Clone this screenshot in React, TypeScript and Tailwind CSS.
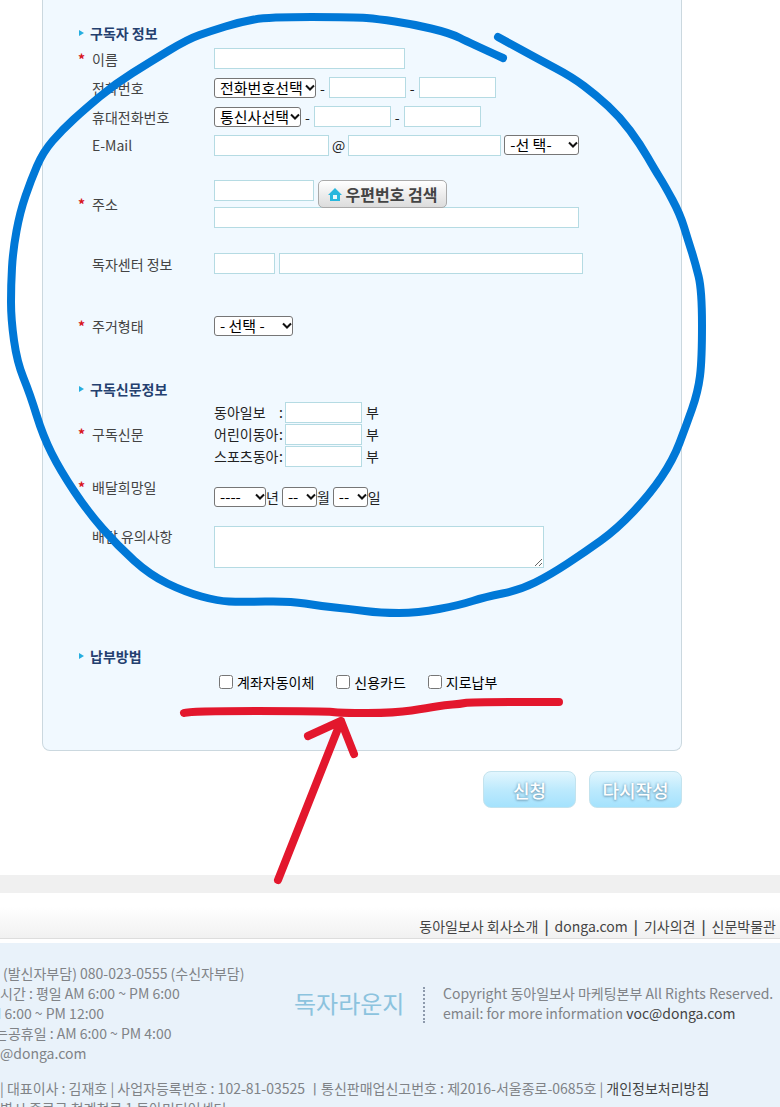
import type { ReactNode } from "react";

type Point = [number, number];

const circlePoints: Point[] = [
  [503, 58], [470, 43], [450, 33], [412, 24], [378, 19], [355, 17], [268, 17], [240, 22], [211, 31],
  [188, 39], [150, 62], [115, 84], [85, 109], [62, 130], [43, 152], [31, 180], [20, 212], [13, 250],
  [11, 285], [11, 319], [17, 362], [30, 394], [43, 436], [60, 470], [88, 512], [118, 546], [150, 575],
  [185, 592], [218, 601], [240, 602], [290, 601], [320, 606], [350, 609], [380, 613], [418, 613],
  [460, 605], [485, 597], [520, 590], [550, 575], [585, 552], [617, 529], [650, 494], [673, 460],
  [686, 426], [698, 392], [702, 360], [702, 290], [695, 262], [688, 240], [680, 214], [665, 186],
  [655, 170], [640, 144], [620, 117], [596, 95], [572, 77], [540, 60], [498, 37],
];

const underlinePoints: Point[] = [
  [184, 713], [190, 711], [325, 711], [340, 713], [395, 713], [428, 708], [445, 705], [460, 704],
  [470, 702], [559, 702],
];

// smooth line through the midpoints of the segments
function toPath(points: Point[]) {
  const last = points[points.length - 1];
  let d = `M${points[0][0]} ${points[0][1]}`;
  for (let i = 1; i < points.length - 1; i++) {
    const [x, y] = points[i];
    const [nx, ny] = points[i + 1];
    d += `Q${x} ${y} ${(x + nx) / 2} ${(y + ny) / 2}`;
  }
  return `${d}L${last[0]} ${last[1]}`;
}

function Marks() {
  return (
    <svg
      className="pointer-events-none absolute left-0 top-0"
      width="780"
      height="900"
      fill="none"
      strokeWidth="8"
      strokeLinecap="round"
      strokeLinejoin="round"
      aria-hidden="true"
    >
      <path stroke="#0078d7" d={toPath(circlePoints)} />
      <g stroke="#e3172d">
        <path d={toPath(underlinePoints)} />
        <path d="M278 880L341 721M308 736L341 721L354 754" />
      </g>
    </svg>
  );
}

const field = "h-[21px] border border-[#b5dbe3] bg-white px-1 text-sm outline-none";

type SelectProps = { id?: string; label?: string; text: string; className: string };

function Select({ id, label, text, className }: SelectProps) {
  return (
    <div className={`relative ${className}`}>
      <select
        id={id}
        aria-label={label}
        className="block h-5 w-full appearance-none rounded-[3px] border border-[#767676] bg-white pl-[5px] text-[15px] leading-[18px] text-black"
      >
        <option>{text}</option>
      </select>
      <svg
        className="pointer-events-none absolute right-px top-[6px]"
        width="10"
        height="8"
        viewBox="0 0 10 8"
        fill="none"
        stroke="#111"
        strokeWidth="2"
        aria-hidden="true"
      >
        <path d="M1 1.5L5 5.5L9 1.5" />
      </svg>
    </div>
  );
}

function Heading({ children, className = "" }: { children: ReactNode; className?: string }) {
  return (
    <h2 className={`flex h-[22px] items-center gap-[5px] text-sm font-bold text-[#24406f] ${className}`}>
      <svg width="7" height="8" viewBox="0 0 7 8" aria-hidden="true">
        <path d="M1 1L6 4L1 7Z" fill="#25aee0" />
      </svg>
      {children}
    </h2>
  );
}

type RowProps = {
  label: string;
  htmlFor?: string;
  required?: boolean;
  className?: string;
  children: ReactNode;
};

function Row({ label, htmlFor, required, className = "h-[29px] items-center", children }: RowProps) {
  return (
    <div className={`flex ${className}`}>
      <span className="w-[14px] shrink-0 text-sm font-bold leading-5 text-[#d8141c]">
        {required && "*"}
      </span>
      <label htmlFor={htmlFor} className="w-[122px] shrink-0 leading-5 text-[#444]">
        {label}
      </label>
      {children}
    </div>
  );
}

const papers = [
  { id: "donga", name: "동아일보" },
  { id: "kids", name: "어린이동아" },
  { id: "sports", name: "스포츠동아" },
];

const payments = [
  { id: "account", name: "계좌자동이체" },
  { id: "card", name: "신용카드" },
  { id: "giro", name: "지로납부" },
];

const submitButton =
  "h-[37px] w-[93px] rounded-[8px] border border-[#c3e3ee] bg-linear-to-b from-[#e2f6fe] via-[#bdeafd] to-[#a4e2fd] text-lg leading-5 font-medium text-white [text-shadow:0_0_3px_#6f9db8,0_1px_2px_#7fa9c0]";

export default function App() {
  return (
    <div className="relative overflow-x-clip bg-white font-['Noto_Sans_CJK_KR',sans-serif] text-sm text-[#222]">
      <form onSubmit={(e) => e.preventDefault()} className="ml-[42px] max-w-[640px]">
        <div className="rounded-b-[8px] border border-t-0 border-[#cbd8df] bg-[#f1f9ff] pb-[54px] pl-[35px] pt-[22px]">
          <Heading>구독자 정보</Heading>
          <Row label="이름" htmlFor="name" required>
            <input id="name" className={`${field} w-[191px]`} />
          </Row>
          <Row label="전화번호" htmlFor="tel">
            <div className="flex items-center gap-1">
              <Select id="tel" text="전화번호선택" className="w-[102px]" />
              -
              <input aria-label="전화번호 중간자리" className={`${field} w-[77px]`} />
              -
              <input aria-label="전화번호 끝자리" className={`${field} w-[77px]`} />
            </div>
          </Row>
          <Row label="휴대전화번호" htmlFor="mobile">
            <div className="flex items-center gap-1">
              <Select id="mobile" text="통신사선택" className="w-[87px]" />
              -
              <input aria-label="휴대전화 중간자리" className={`${field} w-[77px]`} />
              -
              <input aria-label="휴대전화 끝자리" className={`${field} w-[77px]`} />
            </div>
          </Row>
          <Row label="E-Mail" htmlFor="email" className="h-7 items-center">
            <div className="flex items-center gap-[3px]">
              <input id="email" className={`${field} w-[115px]`} />
              @
              <input aria-label="메일 도메인" className={`${field} w-[153px]`} />
              <Select label="메일 도메인 선택" text="-선 택-" className="w-[75px]" />
            </div>
          </Row>
          <Row label="주소" htmlFor="zip" required className="mt-[21px] items-center">
            <div className="w-[365px]">
              <div className="flex h-[27px] items-start gap-1">
                <input id="zip" className={`${field} w-[100px]`} />
                <button
                  type="button"
                  className="flex h-7 w-[129px] shrink-0 items-center justify-center gap-1 rounded-[5px] border border-[#aaa] bg-linear-to-b from-white to-[#dcdcdc] text-base leading-5 font-bold text-[#444]"
                >
                  <svg width="14" height="13" viewBox="0 0 14 13" aria-hidden="true">
                    <path d="M7 0L14 7H12V13H2V7H0Z" fill="#27b7dd" />
                    <path d="M5 7H9V11H5Z" fill="#e8f7fb" />
                  </svg>
                  우편번호 검색
                </button>
              </div>
              <input aria-label="상세주소" className={`${field} block w-full`} />
            </div>
          </Row>
          <Row label="독자센터 정보" htmlFor="center" className="mt-[21px] h-[29px] items-center">
            <div className="flex gap-1">
              <input id="center" className={`${field} w-[61px]`} />
              <input aria-label="독자센터 이름" className={`${field} w-[304px]`} />
            </div>
          </Row>
          <Row label="주거형태" htmlFor="house" required className="mt-[33px] h-[29px] items-center">
            <Select id="house" text="- 선택 -" className="w-[79px]" />
          </Row>

          <Heading className="mt-[38px]">구독신문정보</Heading>
          <Row label="구독신문" htmlFor="donga" required className="mt-px items-center">
            <div>
              {papers.map((p) => (
                <div key={p.id} className="flex h-[22px] items-center">
                  <label htmlFor={p.id} className="flex w-[71px] justify-between pr-[2px] leading-5">
                    <span>{p.name}</span>
                    <span>:</span>
                  </label>
                  <input id={p.id} className={`${field} mr-1 w-[77px]`} />
                  부
                </div>
              ))}
            </div>
          </Row>
          <Row label="배달희망일" htmlFor="year" required className="mt-[10px] h-10">
            <div className="flex items-center">
              <Select id="year" text="----" className="w-[52px]" />
              년
              <Select label="월" text="--" className="ml-[3px] w-[35px]" />
              월
              <Select label="일" text="--" className="ml-[3px] w-[35px]" />
              일
            </div>
          </Row>
          <Row label="배달 유의사항" htmlFor="memo" className="mt-[9px]">
            <textarea id="memo" className="block h-[42px] w-[330px] border border-[#b5dbe3] bg-white" />
          </Row>

          <Heading className="mt-[77px]">납부방법</Heading>
          <div className="ml-[141px] flex h-[29px] items-center gap-[22px]">
            {payments.map((p) => (
              <label key={p.id} className="flex items-center gap-1 text-black">
                <input type="checkbox" id={p.id} className="size-[14px]" />
                {p.name}
              </label>
            ))}
          </div>
        </div>
        <div className="mt-5 flex justify-end gap-[13px]">
          <button type="submit" className={submitButton}>신청</button>
          <button type="reset" className={submitButton}>다시작성</button>
        </div>
      </form>

      <footer className="mt-[67px]">
        <div className="h-[18px] bg-[#f0f0f0]" />
        <nav className="flex h-[46px] items-end justify-end gap-[6px] border-b border-[#ddd] bg-linear-to-b from-white from-30% to-[#f1f1f1] pb-[2px] pr-1 leading-5 text-[#444]">
          <a href="#company">동아일보사 회사소개</a>
          <b>|</b>
          <a href="#donga">donga.com</a>
          <b>|</b>
          <a href="#opinion">기사의견</a>
          <b>|</b>
          <a href="#museum">신문박물관</a>
        </nav>
        <div className="mt-1 bg-[#e9f2fa] pt-5 leading-5 text-[#808387]">
          <div className="flex whitespace-nowrap">
            <div className="w-[294px] shrink-0">
              <p className="pl-[3px]">(발신자부담) 080-023-0555 (수신자부담)</p>
              <p>시간 : 평일 AM 6:00 ~ PM 6:00</p>
              <p className="-ml-[10px]">M 6:00 ~ PM 12:00</p>
              <p className="-ml-[5px]">는공휴일 : AM 6:00 ~ PM 4:00</p>
              <p>@donga.com</p>
            </div>
            <p className="mt-6 h-9 w-[131px] shrink-0 border-r-2 border-dotted border-[#8d9aac] text-2xl leading-8 text-[#8cc3de]">
              독자라운지
            </p>
            <div className="mt-5 pl-[18px]">
              <p>Copyright 동아일보사 마케팅본부 All Rights Reserved.</p>
              <p>
                email: for more information <a href="mailto:voc@donga.com" className="text-[#444]">voc@donga.com</a>
              </p>
            </div>
          </div>
          <div className="mt-[15px] whitespace-nowrap">
            <p>
              | 대표이사 : 김재호 | 사업자등록번호 : 102-81-03525 ㅣ통신판매업신고번호 : 제2016-서울종로-0685호 |{" "}
              <a href="#privacy" className="text-[#444]">개인정보처리방침</a>
            </p>
            <p>별시 종로구 청계천로 1 동아미디어센터</p>
          </div>
        </div>
      </footer>
      <Marks />
    </div>
  );
}
